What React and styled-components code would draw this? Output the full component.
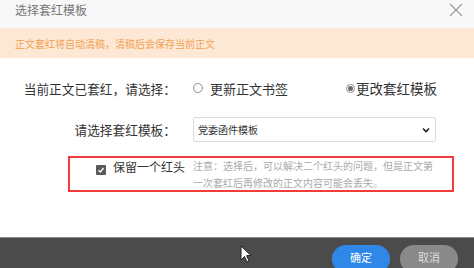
import styled, { createGlobalStyle } from 'styled-components'

const GlobalStyle = createGlobalStyle`
    html, body {
        margin: 0;
        padding: 0;
        background: #fff;
        overflow: hidden;
    }
    body {
        font-family: "Noto Sans CJK SC", "Noto Sans", sans-serif;
    }
`

const Dialog = styled.div`
    position: relative;
    width: 474px;
    height: 268px;
    display: flex;
    flex-direction: column;
    background: #fff;
    overflow: hidden;
`

const Header = styled.div`
    height: 28px;
    flex: none;
    display: flex;
    align-items: center;
    justify-content: space-between;
    padding: 0 11px 0 15px;
    background: #f8f8f8;
`

const Title = styled.span`
    color: #777;
    font-size: 12px;
    line-height: 14px;
    margin-top: -9px;
`

const Close = styled.button`
    border: 0;
    background: none;
    padding: 0;
    margin-top: -8px;
    width: 14px;
    height: 14px;
    display: flex;
`

const Notice = styled.div`
    height: 30px;
    flex: none;
    display: flex;
    align-items: center;
    padding-left: 15px;
    background: #fde8d6;
    color: #f2a152;
    font-size: 10px;
`

const Body = styled.div`
    flex: 1;
    display: flex;
    flex-direction: column;
    padding-top: 20px;
`

const FormRow = styled.div`
    display: grid;
    grid-template-columns: 176px 1fr;
    column-gap: 17px;
    align-items: center;
    height: ${(p) => p.h}px;
    margin-bottom: ${(p) => p.mb}px;
`

const Label = styled.label`
    text-align: right;
    color: #333;
    font-size: 12.7px;
    white-space: nowrap;
`

const Radios = styled.div`
    display: flex;
    align-items: center;
`

const RadioItem = styled.span`
    display: flex;
    align-items: center;
    gap: ${(p) => (p.checked ? 1 : 7)}px;
    margin-right: ${(p) => p.mr || 0}px;
    color: #333;
    font-size: ${(p) => (p.checked ? 13.5 : 13)}px;
`

const RadioDot = styled.span`
    box-sizing: border-box;
    width: ${(p) => (p.checked ? 9 : 10)}px;
    height: ${(p) => (p.checked ? 9 : 10)}px;
    border-radius: 50%;
    border: 1px solid #8f8f8f;
    background: #fff;
    display: flex;
    align-items: center;
    justify-content: center;
    &::after {
        content: '';
        width: 5px;
        height: 5px;
        border-radius: 50%;
        background: ${(p) => (p.checked ? '#6a6a6a' : 'transparent')};
    }
`

const Select = styled.div`
    box-sizing: border-box;
    width: 243px;
    height: 25px;
    border: 1px solid #dcdcdc;
    border-radius: 2px;
    display: flex;
    align-items: center;
    justify-content: space-between;
    padding: 0 4px 0 4px;
    font-size: 10px;
    color: #333;
`

const KeepBox = styled.div`
    box-sizing: border-box;
    margin-left: 68px;
    width: 386px;
    height: 36px;
    border: 2px solid #f23b3b;
    display: flex;
    align-items: flex-start;
    padding-left: 26px;
`

const Check = styled.span`
    box-sizing: border-box;
    width: 10px;
    height: 10px;
    margin-top: 7px;
    border-radius: 1px;
    background: #5a5a5a;
    display: flex;
    align-items: center;
    justify-content: center;
`

const CheckLabel = styled.span`
    margin: 1px 0 0 7px;
    width: 80px;
    font-size: 12px;
    line-height: 16px;
    color: #333;
`

const Hint = styled.p`
    margin: -1px 0 0 0;
    width: 248px;
    font-size: 10px;
    line-height: 17px;
    color: #aaa;
`

const Footer = styled.div`
    height: 31px;
    flex: none;
    box-sizing: border-box;
    border-top: 1px solid #8e8e8e;
    background: #4b4b4b;
    display: flex;
    justify-content: flex-end;
    align-items: flex-start;
    gap: 10px;
    padding: 7px 16px 0 0;
`

const Button = styled.button`
    width: 58px;
    height: 28px;
    border: 0;
    border-radius: 14px;
    background: ${(p) => (p.primary ? '#2f88e8' : '#8a8a8a')};
    color: ${(p) => (p.primary ? '#fff' : '#ddd')};
    font-family: inherit;
    font-size: 11px;
    padding: 0 0 4px;
`

const Cursor = styled.svg`
    position: absolute;
    left: 240px;
    top: 245px;
`

const App = () => {
    return (
        <Dialog>
            <GlobalStyle />
            <Header>
                <Title>选择套红模板</Title>
                <Close>
                    <svg width="14" height="14" viewBox="0 0 14 14">
                        <path d="M1 1 L13 13 M13 1 L1 13" stroke="#9a9a9a" strokeWidth="1.1" />
                    </svg>
                </Close>
            </Header>
            <Notice>正文套红将自动清稿，清稿后会保存当前正文</Notice>
            <Body>
                <FormRow h={20} mb={19}>
                    <Label>当前正文已套红，请选择：</Label>
                    <Radios>
                        <RadioItem mr={58}>
                            <RadioDot />
                            更新正文书签
                        </RadioItem>
                        <RadioItem checked>
                            <RadioDot checked />
                            更改套红模板
                        </RadioItem>
                    </Radios>
                </FormRow>
                <FormRow h={25} mb={14}>
                    <Label>请选择套红模板：</Label>
                    <Select>
                        <span>党委函件模板</span>
                        <svg width="10" height="8" viewBox="0 0 10 8">
                            <path d="M2 2.5 L5 5.5 L8 2.5" fill="none" stroke="#222" strokeWidth="1.6" />
                        </svg>
                    </Select>
                </FormRow>
                <KeepBox>
                    <Check>
                        <svg width="8" height="8" viewBox="0 0 8 8">
                            <path d="M1.5 4.2 L3.3 6 L6.6 2" fill="none" stroke="#fff" strokeWidth="1.3" />
                        </svg>
                    </Check>
                    <CheckLabel>保留一个红头</CheckLabel>
                    <Hint>注意：选择后，可以解决二个红头的问题，但是正文第一次套红后再修改的正文内容可能会丢失。</Hint>
                </KeepBox>
            </Body>
            <Footer>
                <Button primary>确定</Button>
                <Button>取消</Button>
            </Footer>
            <Cursor width="12" height="18" viewBox="0 0 12 18">
                <path d="M1 1 L1 15 L4.5 11.5 L7 17 L9 16 L6.6 10.6 L11 10.6 Z" fill="#fff" stroke="#222" strokeWidth="1" />
            </Cursor>
        </Dialog>
    )
}

export default App
